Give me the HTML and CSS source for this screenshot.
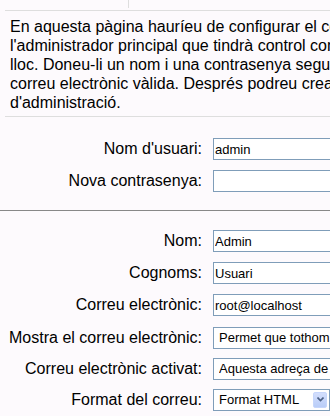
FILE: index.html
```html
<!DOCTYPE html>
<html lang="ca">
<head>
    <meta charset="UTF-8">
    <meta name="viewport" content="width=device-width, initial-scale=1.0">
    <title>Administrador principal</title>
    <link rel="stylesheet" href="styles.css">
</head>
<body>

    <div class="tabs">
        <div class="tab"></div>
    </div>

    <div class="intro">
        En aquesta pàgina hauríeu de configurar el compte de<br>
        l'administrador principal que tindrà control complet sobre aquest<br>
        lloc. Doneu-li un nom i una contrasenya segura i una adreça de<br>
        correu electrònic vàlida. Després podreu crear més comptes<br>
        d'administració.
    </div>

    <div class="form-block">
        <label class="form-label" for="username">Nom d'usuari:</label>
        <div class="form-field"><input id="username" class="text-input" type="text" value="admin"></div>

        <label class="form-label" for="newpassword">Nova contrasenya:</label>
        <div class="form-field"><input id="newpassword" class="text-input" type="text" value=""></div>
    </div>

    <div class="form-block second">
        <label class="form-label" for="firstname">Nom:</label>
        <div class="form-field"><input id="firstname" class="text-input" type="text" value="Admin"></div>

        <label class="form-label" for="lastname">Cognoms:</label>
        <div class="form-field"><input id="lastname" class="text-input" type="text" value="Usuari"></div>

        <label class="form-label" for="email">Correu electrònic:</label>
        <div class="form-field"><input id="email" class="text-input" type="text" value="root@localhost"></div>

        <label class="form-label small-row" for="maildisplay">Mostra el correu electrònic:</label>
        <div class="form-field small-row">
            <span class="select-wrap wide">
                <select id="maildisplay" class="select-input">
                    <option>Permet que tothom vegi la meva adreça de correu</option>
                </select>
            </span>
        </div>

        <label class="form-label small-row" for="emailstop">Correu electrònic activat:</label>
        <div class="form-field small-row">
            <span class="select-wrap wide">
                <select id="emailstop" class="select-input">
                    <option>Aquesta adreça de correu està habilitada</option>
                </select>
            </span>
        </div>

        <label class="form-label small-row" for="mailformat">Format del correu:</label>
        <div class="form-field small-row">
            <span class="select-wrap">
                <select id="mailformat" class="select-input">
                    <option>Format HTML</option>
                </select>
                <span class="select-arrow">
                    <svg width="7" height="5" viewBox="0 0 7 5"><path d="M0.5 0.5 L3.5 3.5 L6.5 0.5" fill="none" stroke="#4d6185" stroke-width="1.6"/></svg>
                </span>
            </span>
        </div>
    </div>

</body>
</html>
```

FILE: styles.css
```css
*{
    margin: 0;
    padding: 0;
    box-sizing: border-box;
}

body{
    width: 330px;
    height: 416px;
    overflow: hidden;
    background-color: #fdfafd;
    color: #000000;
    font-family: "Liberation Sans", Arial, sans-serif;
}

.tabs{
    height: 10px;
}

.tabs .tab{
    width: 129px;
    height: 8px;
    border-right: 1px solid #dedede;
}

.intro{
    margin-left: 5px;
    width: 480px;
    padding: 6px 5px 4px 5px;
    border-top: 1px solid #dedede;
    border-bottom: 1px solid #dedede;
    font-size: 16px;
    line-height: 19px;
    white-space: nowrap;
}

.form-block{
    display: grid;
    grid-template-columns: 202px 300px;
    column-gap: 11px;
    padding: 16px 0 13px 0;
    border-bottom: 1px solid #888888;
}

.form-block.second{
    border-bottom: none;
    padding-top: 14px;
}

.form-label{
    height: 32px;
    display: flex;
    align-items: center;
    justify-content: flex-end;
    font-size: 16px;
    white-space: nowrap;
}

.form-field{
    height: 32px;
    display: flex;
    align-items: center;
}

.form-label.small-row,
.form-field.small-row{
    height: 31px;
    padding-top: 2px;
}

.text-input{
    width: 200px;
    height: 22px;
    padding: 0 1px;
    border: 1px solid #7f9db9;
    background: #ffffff;
    font-family: "Liberation Sans", Arial, sans-serif;
    font-size: 13px;
    color: #000000;
    outline: none;
}

.select-wrap{
    position: relative;
    display: inline-block;
    width: 117px;
    height: 22px;
}

.select-wrap.wide{
    width: 300px;
}

.select-input{
    appearance: none;
    -webkit-appearance: none;
    width: 100%;
    height: 100%;
    padding: 0 5px;
    border: 1px solid #7f9db9;
    border-radius: 0;
    background: #ffffff;
    font-family: "Liberation Sans", Arial, sans-serif;
    font-size: 13px;
    color: #000000;
    outline: none;
}

.select-arrow{
    position: absolute;
    top: 3px;
    right: 3px;
    width: 14px;
    height: 16px;
    display: flex;
    align-items: center;
    justify-content: center;
    background: linear-gradient(#d3defc, #b9cdf8);
    border: 1px solid #c6d6fb;
    border-radius: 2px;
}
```
